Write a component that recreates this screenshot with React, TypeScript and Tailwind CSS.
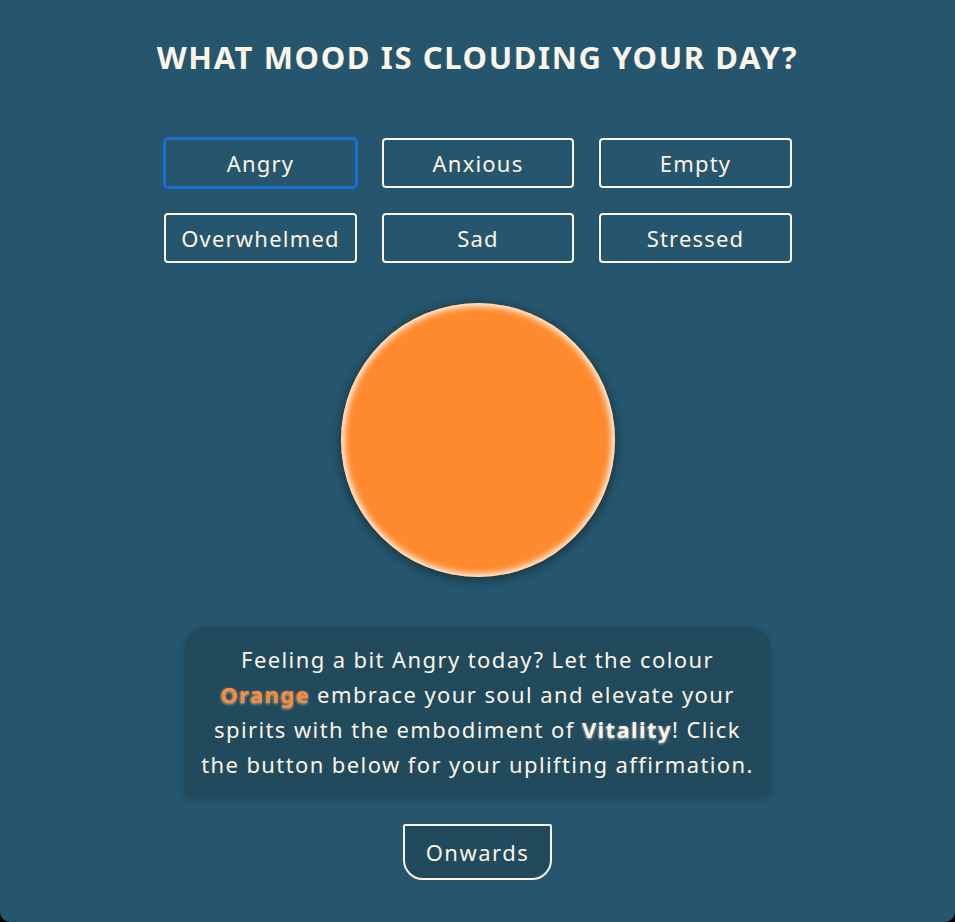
import React from "react";

const moods = ["Angry", "Anxious", "Empty", "Overwhelmed", "Sad", "Stressed"];

export default function App() {
  return (
    <div className="bg-black w-[955px] h-[922px]">
      <div
        className="w-[955px] h-[922px] bg-[#25566d] rounded-b-[10px] flex flex-col items-center text-[#fcf4e6]"
        style={{ fontFamily: '"Noto Sans", "Open Sans", sans-serif' }}
      >
        <h1 className="mt-[36px] text-[31px] font-bold leading-[42px] tracking-[1.6px]">
          WHAT MOOD IS CLOUDING YOUR DAY?
        </h1>
        <div className="mt-[60px] grid grid-cols-[193px_192px_193px] gap-x-[25px] gap-y-[25px] pl-[1px]">
          {moods.map((m) => (
            <button
              key={m}
              className={
                "h-[50px] rounded-[4px] border-2 text-[22px] leading-none tracking-[1.2px] " +
                (m === "Angry"
                  ? "border-[#1a6fd6] outline outline-1 outline-[#1a6fd6]"
                  : "border-[#fcf4e6]")
              }
            >
              {m}
            </button>
          ))}
        </div>
        <div className="mt-[40px] w-[274px] h-[274px] rounded-full bg-[#ff8a2e] shadow-[inset_0_0_6px_3px_#fff6ea,0_2px_8px_2px_rgba(0,0,0,0.35)]" />
        <div className="mt-[50px] w-[585px] h-[169px] bg-[#214a5d] rounded-t-[22px] rounded-b-[4px] shadow-[0_2px_6px_rgba(0,0,0,0.2)] flex items-center justify-center px-[8px]">
          <p className="text-center text-[22px] leading-[35px] tracking-[1.4px] whitespace-nowrap">
            Feeling a bit Angry today? Let the colour
            <br />
            <span className="font-bold text-[#ff8a2e] [text-shadow:0_1px_3px_rgba(255,236,210,0.7)]">
              Orange
            </span>{" "}
            embrace your soul and elevate your
            <br />
            spirits with the embodiment of{" "}
            <span className="font-bold text-[#fcf4e6] [text-shadow:0_1px_3px_rgba(255,255,255,0.6)]">
              Vitality
            </span>
            ! Click
            <br />
            the button below for your uplifting affirmation.
          </p>
        </div>
        <button className="mt-[28px] w-[149px] h-[56px] bg-[#214a5d] border-2 border-[#fcf4e6] rounded-t-[2px] rounded-b-[20px] text-[22px] tracking-[1.5px]">
          Onwards
        </button>
      </div>
    </div>
  );
}
